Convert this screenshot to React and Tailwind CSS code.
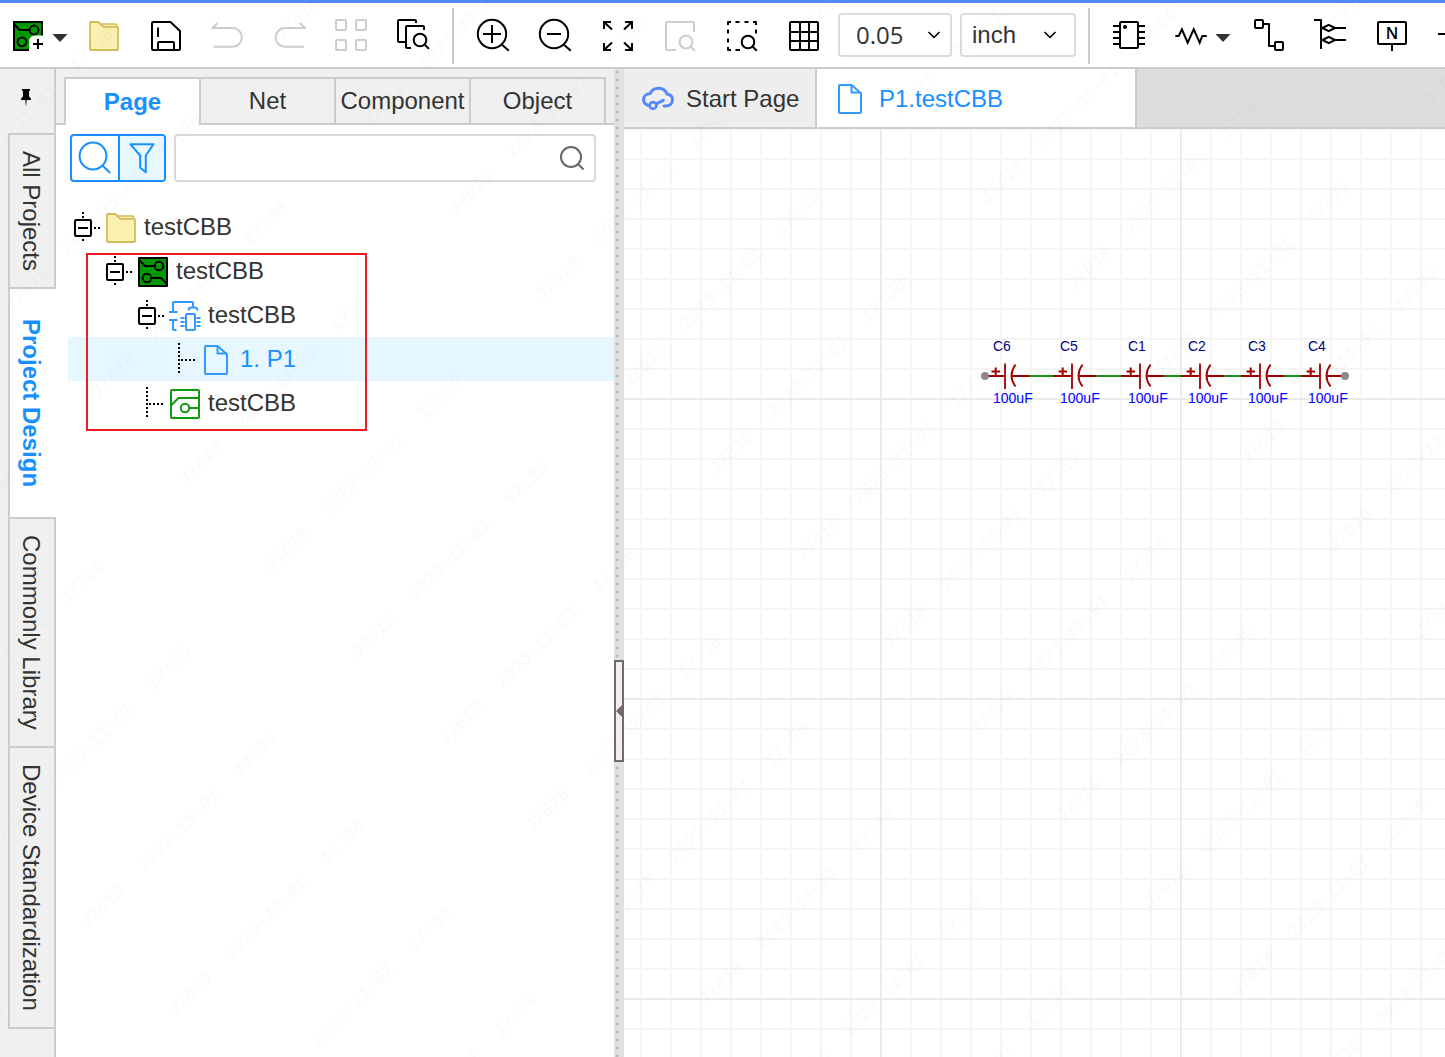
import { useState } from "react";
import { FiChevronDown } from "react-icons/fi";
import clsx from "clsx";

const SIDE_TABS = [
  { name: "All Projects", pad: "py-4" },
  { name: "Project Design", pad: "py-[30px]" },
  { name: "Commonly Library", pad: "py-4" },
  { name: "Device Standardization", pad: "py-4" },
];

const PANEL_TABS = ["Page", "Net", "Component", "Object"];

const CAPS = [
  { id: "C6", x: 381 },
  { id: "C5", x: 448 },
  { id: "C1", x: 516 },
  { id: "C2", x: 576 },
  { id: "C3", x: 636 },
  { id: "C4", x: 696 },
];

/* ---------- icons, all on a 32px box ---------- */

function Icon({ children, className }) {
  return (
    <svg viewBox="0 0 32 32" fill="none" stroke="currentColor" strokeWidth="2" strokeLinejoin="round"
      className={clsx("w-8 h-8 shrink-0 overflow-visible", className)} aria-hidden="true">
      {children}
    </svg>
  );
}

const NewBoardIcon = () => (
  <Icon>
    <rect x="2" y="2" width="28" height="28" fill="#009900" />
    <path d="M2 4l5.5 6h10" />
    <circle cx="22" cy="10" r="4.4" />
    <circle cx="10" cy="21.8" r="4.4" />
    <path d="M17 32V21a6 6 0 0 1 6-5.5h10V32z" fill="#fff" stroke="none" />
    <path d="M26 19v10M21 24h10" />
  </Icon>
);

const BoardIcon = () => (
  <Icon className="text-black">
    <rect x="2" y="2" width="28" height="28" fill="#009900" />
    <path d="M2 4l6 6h9.5" />
    <circle cx="22" cy="10" r="4.3" />
    <circle cx="10" cy="22" r="4.3" />
    <path d="M14.4 22H24l6 6" />
  </Icon>
);

const FolderIcon = () => (
  <Icon className="text-[#d3bb5c]">
    <path d="M12 4h15.500a1 1 0 0 1 1 1V8H12z" fill="#f9f1b0" strokeWidth="1.6" />
    <path d="M3 2h7.300l5 4.800H29a1 1 0 0 1 1 1V29a1 1 0 0 1-1 1H3a1 1 0 0 1-1-1V3a1 1 0 0 1 1-1z" fill="#f9f1b0" strokeWidth="1.8" />
  </Icon>
);

const SaveIcon = () => (
  <Icon>
    <path d="M3 2h17.500l9.500 9V29a1 1 0 0 1-1 1H3a1 1 0 0 1-1-1V3a1 1 0 0 1 1-1z" />
    <path d="M8 7.500v9.500M8 30v-7a1 1 0 0 1 1-1h14a1 1 0 0 1 1 1v7" />
  </Icon>
);

const UndoIcon = () => (
  <Icon className="text-[#cccccc]">
    <path d="M5.500 3L0.500 8H20.500a9.400 9.400 0 0 1 0 18.800H1.500" />
  </Icon>
);

const RedoIcon = () => (
  <Icon className="text-[#cccccc]">
    <path d="M26 3l5 5H11a9.400 9.400 0 0 0 0 18.800h19" />
  </Icon>
);

const TilesIcon = () => (
  <Icon className="text-[#cccccc]">
    <rect x="0" y="0" width="10" height="10" rx="1" />
    <rect x="20" y="0" width="10" height="10" rx="1" />
    <rect x="0" y="20" width="10" height="10" rx="1" />
    <rect x="20" y="20" width="10" height="10" rx="1" />
  </Icon>
);

const FindPagesIcon = () => (
  <Icon>
    <path d="M18 3V1a1 1 0 0 0-1-1H1a1 1 0 0 0-1 1V21a1 1 0 0 0 1 1H7" />
    <path d="M26 10V7a1 1 0 0 0-1-1H9a1 1 0 0 0-1 1V27a1 1 0 0 0 1 1h4" />
    <circle cx="22" cy="20" r="6.3" />
    <path d="M26.500 24.500l4.500 4.400" />
  </Icon>
);

const ZoomInIcon = () => (
  <Icon>
    <circle cx="15" cy="14" r="14.200" />
    <path d="M6 14h18M15 5v18M25 24.700l6.800 6" />
  </Icon>
);

const ZoomOutIcon = () => (
  <Icon>
    <circle cx="15" cy="14" r="14.200" />
    <path d="M8 14h14M25 24.700l6.800 6" />
  </Icon>
);

const FitIcon = () => (
  <Icon>
    <g strokeLinejoin="miter">
      <path d="M10 2H3v7M3 2l8 7.500" />
      <path d="M24 2h7v7M31 2l-8 7.500" />
      <path d="M10 30H3v-7M3 30l8-7.500" />
      <path d="M24 30h7v-7M31 30l-8-7.500" />
    </g>
  </Icon>
);

const ZoomAreaIcon = () => (
  <Icon className="text-[#cccccc]">
    <path d="M31 12V3a1 1 0 0 0-1-1H4a1 1 0 0 0-1 1V29a1 1 0 0 0 1 1H13" />
    <circle cx="23" cy="22" r="6.400" />
    <path d="M27.500 26.500l4.300 4.200" />
  </Icon>
);

const SelectAreaIcon = () => (
  <Icon>
    <path d="M3 5V2h3M10.500 2h4M19.500 2h4M28 2h3v3M31 9.500v4M3 9.500v4M3 18.500v4M3 27v3h3M10.500 30h4.500" />
    <circle cx="23" cy="22" r="6.300" />
    <path d="M27.500 26.500l4.300 4.200" />
  </Icon>
);

const GridIcon = () => (
  <Icon>
    <rect x="3" y="2" width="28" height="28" rx="1" />
    <path d="M13 2v28M22 2v28M3 12h28M3 21h28" />
  </Icon>
);

const ChipIcon = () => (
  <Icon>
    <rect x="7" y="2" width="18" height="26" rx="1" />
    <path d="M0 6h6M0 12h6M0 18h6M0 24h6M26 6h6M26 12h6M26 18h6M26 24h6" />
    <circle cx="12" cy="7" r="2" fill="currentColor" stroke="none" />
  </Icon>
);

const ResistorIcon = () => (
  <Icon>
    <path strokeLinejoin="miter" d="M0.300 16h3.400l3.200-6.700 5.800 13.400 6-13.400 6 13.400 2.600-6.700h4.400" />
  </Icon>
);

const WireIcon = () => (
  <Icon>
    <rect x="2" y="0" width="8" height="8" rx="1" />
    <rect x="22" y="22" width="8" height="8" rx="1" />
    <path d="M10 4h6v22h6" />
  </Icon>
);

const BusIcon = () => (
  <Icon>
    <path d="M-1 0h7v29M7.500 8l6.200-3.200L20 8l-6.300 3.200zM20 8h11M7.500 20l6.200-3.200L20 20l-6.300 3.200zM20 20h11" />
  </Icon>
);

const NetLabelIcon = () => (
  <Icon>
    <rect x="1" y="2" width="28" height="22" rx="1" />
    <path d="M15 24v7" />
    <text x="15" y="18.500" textAnchor="middle" fill="currentColor" stroke="none"
      className="font-['Open_Sans',sans-serif] text-base font-semibold">N</text>
  </Icon>
);

const PortIcon = () => (
  <Icon>
    <path d="M-1 14h14M13 8h18v13H13z" />
  </Icon>
);

const FileIcon = ({ className }) => (
  <Icon className={clsx("text-[#3399ff]", className)}>
    <path d="M5 2h11.500L26 10.200V29a1 1 0 0 1-1 1H5a1 1 0 0 1-1-1V3a1 1 0 0 1 1-1z" />
    <path d="M16.500 2v7.500h9" />
  </Icon>
);

const SchematicIcon = () => (
  <Icon className="text-[#3399ff]">
    <path d="M4 12V3a1 1 0 0 1 1-1h18a1 1 0 0 1 1 1v4.500M19.500 10.500c0-2 1.500-3 3-3h3c1.500 0 3 1 3 3" />
    <path d="M0 12h8.500M0 20h8.500M4 20v9a1 1 0 0 0 1 1h2.500" />
    <rect x="17" y="14" width="9" height="16" rx="1" />
    <path d="M11.500 18h4M11.500 22h4M11.500 26h4M27.500 18h4M27.500 22h4M27.500 26h4" strokeWidth="1.800" />
  </Icon>
);

const PcbIcon = () => (
  <Icon className="text-[#0a9c0a]">
    <rect x="2" y="2" width="28" height="28" rx="1" />
    <path d="M2 17.500L9.500 10H30M20.300 20H30" />
    <circle cx="16" cy="20" r="4.200" />
  </Icon>
);

const CloudIcon = () => (
  <Icon className="text-[#5588ff]">
    <g strokeWidth="3" strokeLinecap="round">
      <path d="M6.500 22.500C3.500 21.500 1.600 19.500 1.600 16.700c0-3.500 2.600-6 6.600-6.200C9.500 7.300 13 5.300 16.800 5.300c4.200 0 7 2.400 8 5.700 3.400.3 5.600 2.600 5.600 5.800 0 3.700-2.800 6.200-6.400 6.200h-2" />
      <circle cx="11" cy="22.500" r="3.400" strokeWidth="2.600" />
      <path d="M14.500 20.700l6.800-3.400" />
    </g>
  </Icon>
);

const PinIcon = () => (
  <svg viewBox="0 0 10 18" className="w-2.5 h-[18px]" aria-hidden="true">
    <path d="M1 0h8v2H8v5.500c1.300.8 2 1.800 2 3.500H5.700L5 18l-.7-7H0c0-1.700.7-2.700 2-3.500V2H1z" />
  </svg>
);

const Caret = () => (
  <svg viewBox="0 0 16 12" className="w-4 h-3" aria-hidden="true">
    <path d="M0.500 4h15L8 12z" fill="#333" />
  </svg>
);

/* ---------- toolbar ---------- */

function Tool({ label, children, disabled }) {
  return (
    <button type="button" aria-label={label} disabled={disabled} className="shrink-0 text-black">
      {children}
    </button>
  );
}

function ToolSelect({ label, value, className, width, chevron }) {
  return (
    <div className={clsx("relative shrink-0", width)}>
      <select aria-label={label} defaultValue={value}
        className={clsx("w-full h-11 appearance-none rounded border-2 border-[#d9dbe0] bg-white text-2xl leading-8 text-[#333]", className)}>
        <option>{value}</option>
      </select>
      <FiChevronDown size={20} className={clsx("absolute top-3 pointer-events-none text-black", chevron)} />
    </div>
  );
}

function Toolbar() {
  return (
    <header className="flex shrink-0 items-center overflow-hidden h-[69px] pt-0.5 pl-3 bg-white
      border-t-3 border-t-[#5588ff] border-b-2 border-b-[#cccccc]">
      <div className="flex items-center gap-2 mr-5">
        <Tool label="New"><NewBoardIcon /></Tool>
        <Tool label="New menu"><Caret /></Tool>
      </div>

      <div className="flex items-center gap-[30px]">
        <Tool label="Open"><FolderIcon /></Tool>
        <Tool label="Save"><SaveIcon /></Tool>
        <Tool label="Undo" disabled><UndoIcon /></Tool>
        <Tool label="Redo" disabled><RedoIcon /></Tool>
        <Tool label="Arrange" disabled><TilesIcon /></Tool>
        <Tool label="Find"><FindPagesIcon /></Tool>
      </div>

      <div className="w-0.5 h-14 ml-[22px] mr-[23px] shrink-0 bg-[#cccccc]" />

      <div className="flex items-center gap-[30px]">
        <Tool label="Zoom in"><ZoomInIcon /></Tool>
        <Tool label="Zoom out"><ZoomOutIcon /></Tool>
        <Tool label="Fit all"><FitIcon /></Tool>
        <Tool label="Fit selected" disabled><ZoomAreaIcon /></Tool>
        <Tool label="Fit area"><SelectAreaIcon /></Tool>
        <Tool label="Grid"><GridIcon /></Tool>
      </div>

      <div className="flex items-center gap-2 ml-[19px] -mt-0.5">
        <ToolSelect label="Grid size" value="0.05" width="w-[114px]" chevron="right-2"
          className="pl-4 font-['Open_Sans','Noto_Sans',sans-serif]" />
        <ToolSelect label="Unit" value="inch" width="w-[116px]" chevron="right-4" className="pl-2.5" />
      </div>

      <div className="w-0.5 h-14 ml-3 mr-[23px] shrink-0 bg-[#cccccc]" />

      <div className="flex items-center gap-[30px]">
        <Tool label="Device"><ChipIcon /></Tool>
        <div className="flex items-center gap-2 -mr-2">
          <Tool label="Resistor"><ResistorIcon /></Tool>
          <Tool label="Resistor menu"><Caret /></Tool>
        </div>
        <Tool label="Wire"><WireIcon /></Tool>
        <Tool label="Bus"><BusIcon /></Tool>
        <Tool label="Net label"><NetLabelIcon /></Tool>
        <Tool label="Port"><PortIcon /></Tool>
      </div>
    </header>
  );
}

/* ---------- left side ---------- */

function SideRail({ active, onSelect }) {
  return (
    <nav className="flex flex-col w-14 shrink-0 bg-[#f0f0f0]">
      <div className="flex h-16 justify-center pt-5 pr-0.5 border-r-2 border-[#cccccc]">
        <button type="button" aria-label="Pin panel" className="self-start"><PinIcon /></button>
      </div>
      {SIDE_TABS.map(({ name, pad }) => (
        <button key={name} type="button" onClick={() => onSelect(name)}
          className={clsx(
            "ml-2 flex justify-center items-center border-l-2 border-t-2 border-[#cccccc] text-2xl",
            pad,
            name === active ? "bg-white font-bold text-[#1890ff] pr-1" : "border-r-2 pr-0.5 text-[#333]"
          )}>
          <span className="[writing-mode:vertical-rl] whitespace-nowrap leading-8">{name}</span>
        </button>
      ))}
      <div className="ml-2 h-0.5 bg-[#cccccc]" />
      <div className="flex-1 border-r-2 border-[#cccccc]" />
    </nav>
  );
}

function Branch({ leaf }) {
  if (leaf) {
    return (
      <svg viewBox="0 0 37 44" className="w-[37px] h-11 shrink-0" fill="none" stroke="#000" strokeWidth="2" strokeDasharray="2 2" aria-hidden="true">
        <path d="M15 6v31M17 23h16" />
      </svg>
    );
  }
  return (
    <button type="button" aria-label="Collapse" className="shrink-0">
      <svg viewBox="0 0 37 44" className="w-[37px] h-11" fill="none" stroke="#000" strokeWidth="2" aria-hidden="true">
        <path d="M15 7v7M15 34v2M26 23h6" strokeDasharray="2 2" />
        <rect x="7" y="15" width="16" height="16" rx="1" />
        <path d="M10 23h10" />
      </svg>
    </button>
  );
}

function TreeRow({ indent, icon, label, leaf, selected }) {
  return (
    <li className={clsx("flex items-center h-11 ml-3 text-2xl", indent, selected ? "bg-[#e6f7ff] text-[#1890ff]" : "text-[#333]")}>
      <Branch leaf={leaf} />
      <span className="mt-0.5">{icon}</span>
      <span className="ml-[7px]">{label}</span>
    </li>
  );
}

function ProjectPanel() {
  const [tab, setTab] = useState("Page");
  const [query, setQuery] = useState("");

  return (
    <aside className="flex flex-col w-[558px] shrink-0 bg-white">
      <div className="flex h-14 bg-[#f0f0f0]">
        <div className="w-2 border-b-2 border-[#cccccc]" />
        <div className="flex mt-2 border-l-2 border-[#cccccc]">
          {PANEL_TABS.map((name) => (
            <button key={name} type="button" onClick={() => setTab(name)}
              className={clsx(
                "w-[135px] border-t-2 border-r-2 border-[#cccccc] text-2xl",
                name === tab ? "bg-white font-bold text-[#1890ff]" : "border-b-2 text-[#333]"
              )}>
              {name}
            </button>
          ))}
        </div>
        <div className="flex-1 border-b-2 border-[#cccccc]" />
      </div>

      {/* Search + filter */}
      <div className="flex gap-2 pt-[9px] pl-3.5 pr-[18px]">
        <div className="flex w-24 h-12 rounded-sm border-2 border-[#1890ff] text-[#1890ff] overflow-hidden">
          <button type="button" aria-label="Search" className="w-12 flex items-center justify-center border-r-2 border-[#1890ff]">
            <Icon>
              <circle cx="14" cy="14" r="13.400" />
              <path d="M23.700 23.700l7.500 7.300" />
            </Icon>
          </button>
          <button type="button" aria-label="Filter" className="flex-1 flex items-center justify-center bg-[#e6f7ff]">
            <Icon>
              <path d="M4.500 2.300h23l-7.700 11.200v16.800l-5.600-4.500V13.500z" />
            </Icon>
          </button>
        </div>
        <div className="relative flex-1">
          <input type="text" aria-label="Search pages" value={query} onChange={(e) => setQuery(e.target.value)}
            className="w-full h-12 pl-3 pr-12 rounded border-2 border-[#d9d9d9] text-2xl text-[#333] outline-none" />
          <svg viewBox="0 0 24 24" className="absolute right-3 top-3 w-6 h-6 pointer-events-none" fill="none" stroke="#666" strokeWidth="2" aria-hidden="true">
            <circle cx="11" cy="11" r="10" />
            <path d="M18 18l5.500 5.500" />
          </svg>
        </div>
      </div>

      {/* Project tree */}
      <ul className="relative mt-[23px]">
        <TreeRow indent="pl-0" icon={<FolderIcon />} label="testCBB" />
        <TreeRow indent="pl-8" icon={<BoardIcon />} label="testCBB" />
        <TreeRow indent="pl-16" icon={<SchematicIcon />} label="testCBB" />
        <TreeRow indent="pl-24" icon={<FileIcon />} label="1. P1" leaf selected />
        <TreeRow indent="pl-16" icon={<PcbIcon />} label="testCBB" leaf />
        <li aria-hidden="true" className="absolute left-[30px] top-12 w-[281px] h-[178px] border-2 border-[#ee1c25] pointer-events-none" />
      </ul>
    </aside>
  );
}

function Splitter() {
  return (
    <div className="flex flex-col w-2.5 shrink-0 bg-[#e1e1e1]
      bg-[radial-gradient(circle_at_3px_3px,#bdbdbd_1px,transparent_2px)] bg-size-[10px_8px]">
      <div className="grow-2" />
      <button type="button" aria-label="Collapse panel"
        className="flex items-center justify-center h-[102px] border-2 border-[#746a6e] bg-[#f0eff0]">
        <svg viewBox="0 0 6 12" className="w-1.5 h-3 shrink-0" aria-hidden="true">
          <path d="M6 0v12L0 6z" fill="#746a6e" />
        </svg>
      </button>
      <div className="grow" />
    </div>
  );
}

/* ---------- schematic ---------- */

function Capacitor({ id, x }) {
  return (
    <g transform={`translate(${x} 247)`}>
      <g stroke="#a00000" strokeWidth="1.800" fill="none">
        <path d="M-19 0H0M6.500 0H24.500" />
        <path d="M0-12.500v25.500M10.500-11.500q-8 11.500 0 22" />
        <path d="M-13.500-4.500h8.500M-9.300-8.500v8" strokeWidth="2" />
      </g>
      <text x="-12" y="-25" fill="#000080">{id}</text>
      <text x="-12" y="27" fill="#0000ff">100uF</text>
    </g>
  );
}

function Canvas() {
  return (
    <div className="relative flex-1 bg-white">
      <svg className="absolute inset-0 w-full h-full text-sm">
        <defs>
          <pattern id="minor" x="16" y="29" width="30" height="30" patternUnits="userSpaceOnUse">
            <path d="M1 0v30M0 1h30" stroke="#f5f5f5" strokeWidth="2" />
          </pattern>
          <pattern id="major" x="256" y="269" width="300" height="300" patternUnits="userSpaceOnUse">
            <path d="M1 0v300M0 1h300" stroke="#ebebeb" strokeWidth="2" />
          </pattern>
        </defs>
        <rect width="100%" height="100%" fill="url(#minor)" />
        <rect width="100%" height="100%" fill="url(#major)" />
        {CAPS.slice(1).map((c, i) => (
          <path key={c.id} d={`M${CAPS[i].x + 24} 247H${c.x - 18}`} stroke="#008800" strokeWidth="1.800" />
        ))}
        {CAPS.map((c) => (
          <Capacitor key={c.id} id={c.id} x={c.x} />
        ))}
        <circle cx="361" cy="247" r="3" fill="#a08080" stroke="#8a8a8a" strokeWidth="2" />
        <circle cx="721" cy="247" r="3" fill="#a08080" stroke="#8a8a8a" strokeWidth="2" />
      </svg>
    </div>
  );
}

function Editor() {
  return (
    <main className="flex flex-col flex-1 min-w-0">
      <div className="flex h-[60px] shrink-0 bg-[#dddddd] border-b-2 border-[#cccccc] text-2xl">
        <button type="button" className="flex items-center gap-3 w-[193px] shrink-0 pt-0.5 pl-[18px] bg-[#eeeeee] text-[#333] border-r-2 border-[#cccccc]">
          <CloudIcon />
          <span>Start Page</span>
        </button>
        <button type="button" className="flex items-center gap-3 w-80 shrink-0 pt-0.5 pl-[18px] bg-white text-[#1890ff] border-r-2 border-[#cccccc]">
          <FileIcon />
          <span>P1.testCBB</span>
        </button>
      </div>
      <Canvas />
    </main>
  );
}

/* Faint diagonal user / date stamp over the whole window */
function Watermark() {
  return (
    <svg className="absolute inset-0 w-full h-full pointer-events-none" aria-hidden="true">
      <defs>
        <pattern id="stamp" width="383" height="122.800" patternUnits="userSpaceOnUse" patternTransform="rotate(-45)">
          <g fill="#000" fillOpacity="0.022" textAnchor="middle" className="font-['Liberation_Mono',monospace] text-lg italic">
            <text x="30" y="106">17:36</text>
            <text x="197" y="106">J7618</text>
            <text x="305" y="106">2023-11-01</text>
          </g>
        </pattern>
      </defs>
      <rect width="100%" height="100%" fill="url(#stamp)" />
    </svg>
  );
}

export default function App() {
  const [side, setSide] = useState("Project Design");

  return (
    <div className="relative flex flex-col min-h-screen overflow-hidden bg-white font-['Liberation_Sans',Arial,sans-serif]">
      <Toolbar />
      <div className="flex flex-1">
        <SideRail active={side} onSelect={setSide} />
        <ProjectPanel />
        <Splitter />
        <Editor />
      </div>
      <Watermark />
    </div>
  );
}
